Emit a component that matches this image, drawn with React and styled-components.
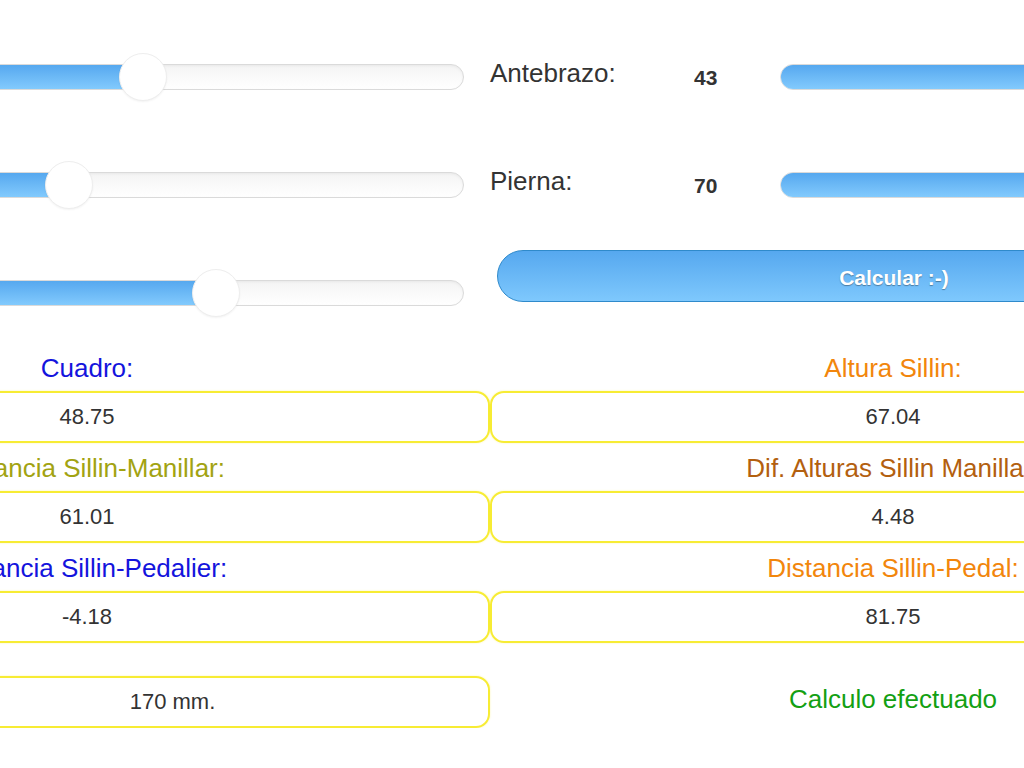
import styled, { createGlobalStyle } from "styled-components"

const Global = createGlobalStyle`
    html, body {
        margin: 0;
        padding: 0;
        background: #fff;
        overflow: hidden;
    }
    body {
        font-family: "Liberation Sans", Arial, Helvetica, sans-serif;
    }
`
const Page = styled.div`
    width: 1612px;
    margin-left: -316px;
`
const Controls = styled.div`
    display: grid;
    grid-template-columns: 806px 806px;
    grid-auto-rows: 108px;
    padding-top: 23px;
`
const SliderRow = styled.div`
    display: flex;
    align-items: center;
`
const Label = styled.div`
    width: 204px;
    min-height: 30px;
    font-size: 26px;
    line-height: 30px;
    color: #333;
    padding-bottom: 8px;
`
const Value = styled.div`
    width: 86px;
    min-height: 24px;
    font-size: 21px;
    font-weight: bold;
    color: #333;
    padding-top: 2px;
`
const Track = styled.div`
    position: relative;
    flex: 1;
    height: 24px;
    margin-right: 26px;
    border: 1px solid #dadada;
    border-radius: 13px;
    background: linear-gradient(#f4f4f4, #fff);
    box-shadow: inset 0 1px 3px rgba(0, 0, 0, 0.05);
`
const Fill = styled.div`
    height: 100%;
    border-radius: 13px 0 0 13px;
    background: linear-gradient(#56a8ef, #82cafd);
`
const Thumb = styled.div`
    position: absolute;
    top: 50%;
    width: 46px;
    height: 46px;
    border-radius: 50%;
    background: #fff;
    border: 1px solid #eeeeee;
    box-shadow: 0 1px 2px rgba(0, 0, 0, 0.05);
    transform: translate(-50%, -50%);
`
const ButtonCell = styled.div`
    display: flex;
    align-items: flex-start;
    padding: 11px 5px 0 7px;
`
const Button = styled.button`
    flex: 1;
    height: 52px;
    border: 1px solid #2f8acb;
    border-radius: 26px;
    background: linear-gradient(#56a8ef, #7ec8fd);
    color: #fff;
    font-family: "Liberation Sans", Arial, sans-serif;
    font-size: 21px;
    font-weight: bold;
    text-shadow: 0 1px 1px rgba(0, 0, 0, 0.35);
    padding: 4px 0 0;
`
const Results = styled.div`
    display: grid;
    grid-template-columns: 806px 806px;
    margin-top: -4px;
`
const Cell = styled.div`
    display: flex;
    flex-direction: column;
`
const ResultLabel = styled.div`
    height: 48px;
    box-sizing: border-box;
    padding-top: 10px;
    font-size: 26px;
    line-height: 30px;
    text-align: center;
    color: ${p => p.color};
`
const Box = styled.div`
    height: 52px;
    box-sizing: border-box;
    border: 2px solid #f7ec34;
    border-radius: 14px;
    box-shadow: 0 0 2px rgba(250, 235, 40, 0.4);
    display: flex;
    align-items: center;
    justify-content: center;
    font-size: 22px;
    color: #333;
`
const LastRow = styled.div`
    display: grid;
    grid-template-columns: 806px 806px;
    margin-top: 33px;
`
const CrankCell = styled.div`
    display: grid;
    grid-template-columns: 171px 1fr;
    align-items: center;
`
const Status = styled.div`
    display: flex;
    align-items: center;
    justify-content: center;
    padding-bottom: 6px;
    font-size: 26px;
    color: #13a013;
`

const Slider = ({ label, value, pct }) => (
  <SliderRow>
    <Label>{label}</Label>
    <Value>{value}</Value>
    <Track>
      <Fill style={{ width: pct + "%" }} />
      <Thumb style={{ left: pct + "%" }} />
    </Track>
  </SliderRow>
)

const results = [
  ["Cuadro:", "#1414dd", "48.75", "Altura Sillin:", "#f2860c", "67.04"],
  ["Distancia Sillin-Manillar:", "#a2a312", "61.01", "Dif. Alturas Sillin Manillar:", "#b3600f", "4.48"],
  ["Distancia Sillin-Pedalier:", "#1414dd", "-4.18", "Distancia Sillin-Pedal:", "#f2860c", "81.75"],
]

const App = () => {
  return (
    <Page>
      <Global />
      <Controls>
        <Slider pct={34.5} />
        <Slider label="Antebrazo:" value="43" pct={62} />
        <Slider pct={19.2} />
        <Slider label="Pierna:" value="70" pct={65} />
        <Slider pct={49.4} />
        <ButtonCell>
          <Button>Calcular :-)</Button>
        </ButtonCell>
      </Controls>

      <Results>
        {results.map(r => [
          <Cell key={r[0]}>
            <ResultLabel color={r[1]}>{r[0]}</ResultLabel>
            <Box>{r[2]}</Box>
          </Cell>,
          <Cell key={r[3]}>
            <ResultLabel color={r[4]}>{r[3]}</ResultLabel>
            <Box>{r[5]}</Box>
          </Cell>,
        ])}
      </Results>

      <LastRow>
        <CrankCell>
          <Label />
          <Box>170 mm.</Box>
        </CrankCell>
        <Status>Calculo efectuado</Status>
      </LastRow>
    </Page>
  )
}

export default App
